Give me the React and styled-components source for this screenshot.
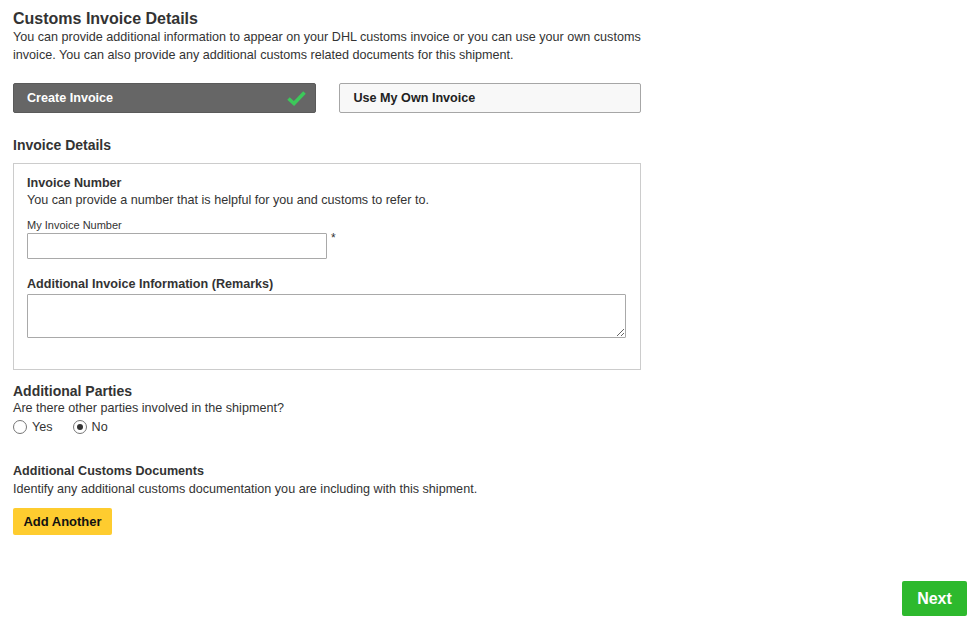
import React from "react";
import styled, { createGlobalStyle } from "styled-components";

const GlobalStyle = createGlobalStyle`
    html, body {
        margin: 0;
        padding: 0;
        background: #fff;
    }
    body {
        font-family: "Liberation Sans", Arial, sans-serif;
        color: #333;
    }
`;

const Page = styled.div`
    min-height: 628px;
    display: flex;
    flex-direction: column;
    box-sizing: border-box;
    padding: 10px 13px 12px;
`;

const Content = styled.div`
    width: 628px;
    flex: 1;
`;

const Title = styled.h1`
    margin: 0;
    font-size: 16px;
    line-height: 18px;
    font-weight: bold;
    color: #333;
`;

const Text = styled.p`
    margin: ${(props) => props.$mt || 0}px 0 0;
    font-size: 12.6px;
    line-height: ${(props) => props.$lh || 18}px;
    color: #333;
`;

const Heading = styled.h2`
    margin: ${(props) => props.$mt || 0}px 0 0;
    font-size: ${(props) => props.$size || 12.6}px;
    line-height: 18px;
    font-weight: bold;
    color: #333;
`;

const Choice = styled.div`
    display: flex;
    gap: 23px;
    margin-top: 19px;
`;

const ChoiceButton = styled.button`
    width: 303px;
    height: 30px;
    display: flex;
    align-items: center;
    justify-content: space-between;
    box-sizing: border-box;
    padding: 0 9px 0 ${(props) => (props.$active ? 13 : 14)}px;
    border: 1px solid ${(props) => (props.$active ? "#5a5a5a" : "#a6a6a6")};
    border-radius: 2px;
    background: ${(props) => (props.$active ? "#666" : "#f8f8f8")};
    color: ${(props) => (props.$active ? "#fff" : "#222")};
    font-family: inherit;
    font-size: 12.6px;
    font-weight: bold;
    cursor: pointer;
`;

const Panel = styled.div`
    margin-top: 9px;
    border: 1px solid #ccc;
    padding: 10px 14px 31px 13px;
`;

const SmallLabel = styled.label`
    display: block;
    margin-top: 10px;
    font-size: 11px;
    line-height: 14px;
    color: #333;
`;

const FieldRow = styled.div`
    display: flex;
    align-items: flex-start;
    margin-top: 1px;
`;

const Input = styled.input`
    width: 300px;
    height: 26px;
    box-sizing: border-box;
    border: 1px solid #a9a9a9;
    border-radius: 1px;
    padding: 2px 6px;
    font-family: inherit;
    font-size: 12px;
`;

const Required = styled.span`
    margin-left: 4px;
    font-size: 12px;
    line-height: 10px;
    color: #333;
`;

const TextArea = styled.textarea`
    display: block;
    width: 100%;
    height: 44px;
    margin-top: 1px;
    box-sizing: border-box;
    border: 1px solid #a9a9a9;
    border-radius: 1px;
    font-family: inherit;
    font-size: 12px;
`;

const Radios = styled.div`
    display: flex;
    gap: 20px;
    margin-top: 2px;
    font-size: 12.6px;
    line-height: 18px;
`;

const RadioLabel = styled.label`
    display: flex;
    align-items: center;
    gap: 5px;
`;

const Radio = styled.input.attrs({ type: "radio" })`
    appearance: none;
    width: 14px;
    height: 14px;
    margin: 0;
    border: 1px solid #767676;
    border-radius: 50%;
    background: #fff;
    display: grid;
    place-content: center;

    &:checked::before {
        content: "";
        width: 6px;
        height: 6px;
        border-radius: 50%;
        background: #333;
    }
`;

const YellowButton = styled.button`
    margin-top: 10px;
    width: 99px;
    height: 27px;
    border: none;
    border-radius: 2px;
    background: #fecc2f;
    color: #111;
    font-family: inherit;
    font-size: 13px;
    font-weight: bold;
    cursor: pointer;
`;

const Footer = styled.div`
    display: flex;
    justify-content: flex-end;
`;

const NextButton = styled.button`
    width: 65px;
    height: 35px;
    border: none;
    border-radius: 2px;
    background: #2db92d;
    color: #fff;
    font-family: inherit;
    font-size: 16px;
    font-weight: bold;
    cursor: pointer;
`;

function Check() {
    return (
        <svg width="19" height="16" viewBox="0 0 19 16">
            <polyline
                points="1.5,8.5 7,13.5 17.5,2.5"
                fill="none"
                stroke="#3cc85a"
                strokeWidth="3.6"
            />
        </svg>
    );
}

export default function App() {
    return (
        <>
            <GlobalStyle />
            <Page>
                <Content>
                    <Title>Customs Invoice Details</Title>
                    <Text $mt={0}>
                        You can provide additional information to appear on your DHL customs invoice or you can use your own customs
                        <br />
                        invoice. You can also provide any additional customs related documents for this shipment.
                    </Text>

                    <Choice>
                        <ChoiceButton $active>
                            Create Invoice
                            <Check />
                        </ChoiceButton>
                        <ChoiceButton>Use My Own Invoice</ChoiceButton>
                    </Choice>

                    <Heading $mt={23} $size={14}>Invoice Details</Heading>
                    <Panel>
                        <Heading>Invoice Number</Heading>
                        <Text $lh={16}>
                            You can provide a number that is helpful for you and customs to refer to.
                        </Text>
                        <SmallLabel htmlFor="invoice-number">My Invoice Number</SmallLabel>
                        <FieldRow>
                            <Input id="invoice-number" type="text" />
                            <Required>*</Required>
                        </FieldRow>
                        <Heading $mt={16}>Additional Invoice Information (Remarks)</Heading>
                        <TextArea />
                    </Panel>

                    <Heading $mt={12} $size={14}>Additional Parties</Heading>
                    <Text $lh={16}>Are there other parties involved in the shipment?</Text>
                    <Radios>
                        <RadioLabel>
                            <Radio name="parties" />
                            Yes
                        </RadioLabel>
                        <RadioLabel>
                            <Radio name="parties" defaultChecked />
                            No
                        </RadioLabel>
                    </Radios>

                    <Heading $mt={26}>Additional Customs Documents</Heading>
                    <Text>Identify any additional customs documentation you are including with this shipment.</Text>
                    <YellowButton>Add Another</YellowButton>
                </Content>
                <Footer>
                    <NextButton>Next</NextButton>
                </Footer>
            </Page>
        </>
    );
}
